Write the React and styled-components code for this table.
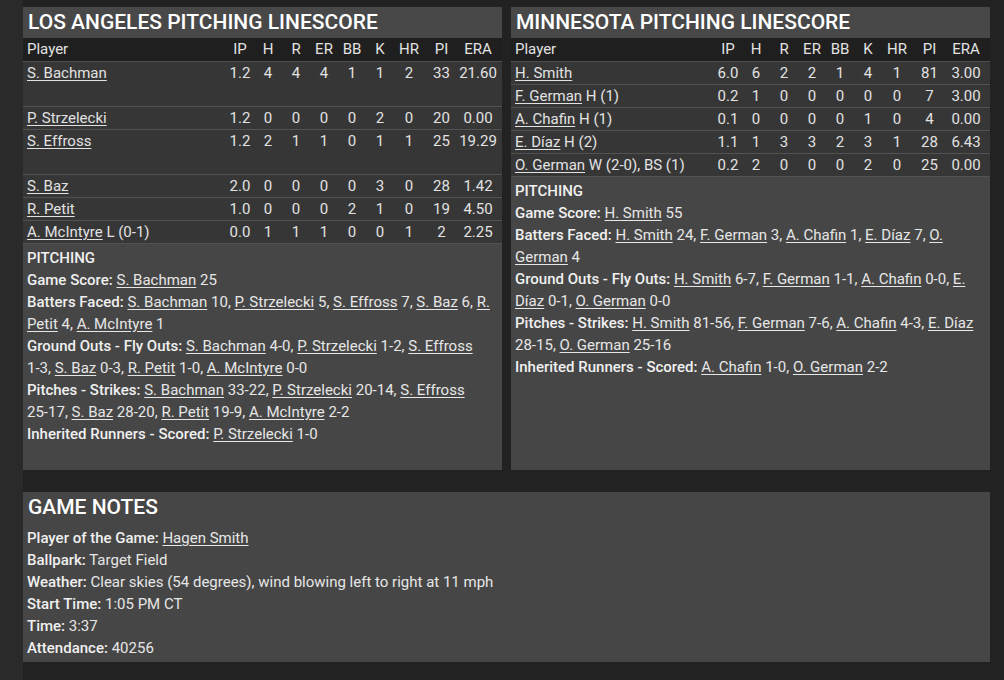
import styled, { createGlobalStyle } from "styled-components";

const Global = createGlobalStyle`
  html, body {
    margin: 0;
    padding: 0;
    background: #2a2a2a;
  }
  body {
    font-family: Roboto, "Liberation Sans", Arial, sans-serif;
    color: #e6e6e6;
  }
`

const Page = styled.div`
  margin-left: 23px;
  min-height: 100vh;
  box-sizing: border-box;
  background: #222222;
  padding: 7px 14px 18px 0;
  display: flex;
  flex-direction: column;
  gap: 22px;
`

const TopRow = styled.div`
  display: grid;
  grid-template-columns: 479px 479px;
  min-height: 463px;
  gap: 9px;
`

const Panel = styled.section`
  background: #464646;
  display: flex;
  flex-direction: column;
`

const Title = styled.h2`
  margin: 0;
  height: 31px;
  line-height: 31px;
  padding-left: 5px;
  font-size: 21px;
  font-weight: 500;
  color: #ffffff;
  background: ${p => (p.$plain ? "transparent" : "#484848")};
  margin-bottom: ${p => p.$gap || 0}px;
`

const COLS = "1fr 28px 28px 28px 28px 28px 28px 30px 35px 38px"

const HeadRow = styled.div`
  display: grid;
  grid-template-columns: ${COLS};
  padding: 0 5px 0 4px;
  height: 23px;
  line-height: 23px;
  background: #1f1f1f;
  border-bottom: 1px solid #4f4f4f;
  font-size: 15px;
  color: #e2e2e2;
`

const Row = styled.div`
  display: grid;
  grid-template-columns: ${COLS};
  padding: 0 5px 0 4px;
  height: ${p => (p.$tall ? 44 : 22)}px;
  line-height: 22px;
  background: #363636;
  border-bottom: 1px solid #525252;
  font-size: 15px;
  color: #e2e2e2;
`

const Cell = styled.span`
  text-align: ${p => (p.$left ? "left" : "center")};
  white-space: nowrap;
`

const Link = styled.a`
  color: inherit;
  text-decoration: underline;
  text-underline-offset: 2px;
  cursor: pointer;
`

const Notes = styled.div`
  padding: ${p => (p.$flush ? 0 : 3)}px 8px 3px 4px;
  font-size: 15px;
  line-height: 22px;
  color: #e6e6e6;
`

const NoteLine = styled.div``

const Label = styled.span`
  font-weight: 500;
  color: #f0f0f0;
`

const Value = styled.span`
  white-space: nowrap;
`

const laRows = [
  { name: "S. Bachman", note: "", s: ["1.2", "4", "4", "4", "1", "1", "2", "33", "21.60"], tall: true },
  { name: "P. Strzelecki", note: "", s: ["1.2", "0", "0", "0", "0", "2", "0", "20", "0.00"] },
  { name: "S. Effross", note: "", s: ["1.2", "2", "1", "1", "0", "1", "1", "25", "19.29"], tall: true },
  { name: "S. Baz", note: "", s: ["2.0", "0", "0", "0", "0", "3", "0", "28", "1.42"] },
  { name: "R. Petit", note: "", s: ["1.0", "0", "0", "0", "2", "1", "0", "19", "4.50"] },
  { name: "A. McIntyre", note: "L (0-1)", s: ["0.0", "1", "1", "1", "0", "0", "1", "2", "2.25"] },
]

const minRows = [
  { name: "H. Smith", note: "", s: ["6.0", "6", "2", "2", "1", "4", "1", "81", "3.00"] },
  { name: "F. German", note: "H (1)", s: ["0.2", "1", "0", "0", "0", "0", "0", "7", "3.00"] },
  { name: "A. Chafin", note: "H (1)", s: ["0.1", "0", "0", "0", "0", "1", "0", "4", "0.00"] },
  { name: "E. Díaz", note: "H (2)", s: ["1.1", "1", "3", "3", "2", "3", "1", "28", "6.43"] },
  { name: "O. German", note: "W (2-0), BS (1)", s: ["0.2", "2", "0", "0", "0", "2", "0", "25", "0.00"] },
]

const laNotes = [
  ["Game Score", [["S. Bachman", "25"]]],
  ["Batters Faced", [["S. Bachman", "10"], ["P. Strzelecki", "5"], ["S. Effross", "7"], ["S. Baz", "6"], ["R. Petit", "4"], ["A. McIntyre", "1"]]],
  ["Ground Outs - Fly Outs", [["S. Bachman", "4-0"], ["P. Strzelecki", "1-2"], ["S. Effross", "1-3"], ["S. Baz", "0-3"], ["R. Petit", "1-0"], ["A. McIntyre", "0-0"]]],
  ["Pitches - Strikes", [["S. Bachman", "33-22"], ["P. Strzelecki", "20-14"], ["S. Effross", "25-17"], ["S. Baz", "28-20"], ["R. Petit", "19-9"], ["A. McIntyre", "2-2"]]],
  ["Inherited Runners - Scored", [["P. Strzelecki", "1-0"]]],
]

const minNotes = [
  ["Game Score", [["H. Smith", "55"]]],
  ["Batters Faced", [["H. Smith", "24"], ["F. German", "3"], ["A. Chafin", "1"], ["E. Díaz", "7"], ["O. German", "4"]]],
  ["Ground Outs - Fly Outs", [["H. Smith", "6-7"], ["F. German", "1-1"], ["A. Chafin", "0-0"], ["E. Díaz", "0-1"], ["O. German", "0-0"]]],
  ["Pitches - Strikes", [["H. Smith", "81-56"], ["F. German", "7-6"], ["A. Chafin", "4-3"], ["E. Díaz", "28-15"], ["O. German", "25-16"]]],
  ["Inherited Runners - Scored", [["A. Chafin", "1-0"], ["O. German", "2-2"]]],
]

const heads = ["IP", "H", "R", "ER", "BB", "K", "HR", "PI", "ERA"]

const Linescore = ({ team, rows, notes }) => (
  <Panel>
    <Title>{team} PITCHING LINESCORE</Title>
    <HeadRow>
      <Cell $left>Player</Cell>
      {heads.map(h => <Cell key={h}>{h}</Cell>)}
    </HeadRow>
    {rows.map(r => (
      <Row key={r.name} $tall={r.tall}>
        <Cell $left>
          <Link>{r.name}</Link>{r.note ? " " + r.note : ""}
        </Cell>
        {r.s.map((v, i) => <Cell key={i}>{v}</Cell>)}
      </Row>
    ))}
    <Notes>
      <NoteLine><Label>PITCHING</Label></NoteLine>
      {notes.map(([label, items]) => (
        <NoteLine key={label}>
          <Label>{label}:</Label>{" "}
          {items.map(([n, v], i) => (
            <span key={n}>
              <Link>{n}</Link> <Value>{v}{i < items.length - 1 ? "," : ""}</Value>{i < items.length - 1 ? " " : ""}
            </span>
          ))}
        </NoteLine>
      ))}
    </Notes>
  </Panel>
)

const gameNotes = [
  ["Ballpark", "Target Field"],
  ["Weather", "Clear skies (54 degrees), wind blowing left to right at 11 mph"],
  ["Start Time", "1:05 PM CT"],
  ["Time", "3:37"],
  ["Attendance", "40256"],
]

const App = () => {
  return <>
    <Global />
    <Page>
      <TopRow>
        <Linescore team="LOS ANGELES" rows={laRows} notes={laNotes} />
        <Linescore team="MINNESOTA" rows={minRows} notes={minNotes} />
      </TopRow>
      <Panel>
        <Title $gap={4} $plain>GAME NOTES</Title>
        <Notes $flush>
          <NoteLine><Label>Player of the Game:</Label> <Link>Hagen Smith</Link></NoteLine>
          {gameNotes.map(([l, v]) => (
            <NoteLine key={l}><Label>{l}:</Label> {v}</NoteLine>
          ))}
        </Notes>
      </Panel>
    </Page>
  </>
}

export default App
